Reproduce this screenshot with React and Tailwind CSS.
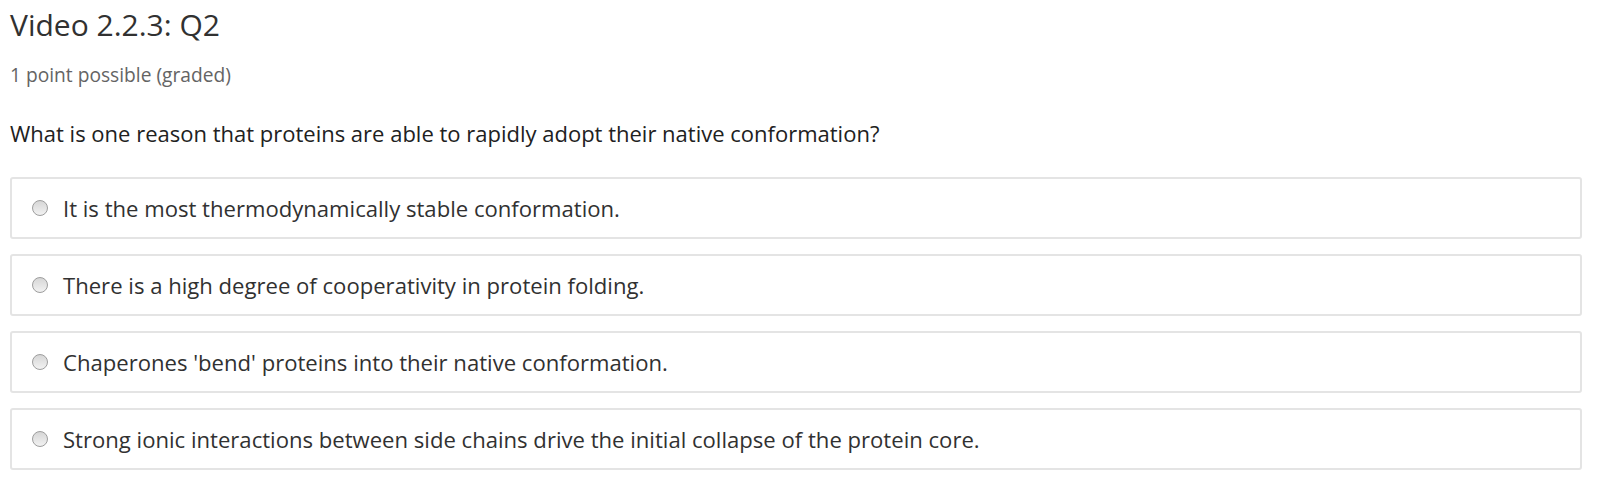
const OPTIONS = [
  "It is the most thermodynamically stable conformation.",
  "There is a high degree of cooperativity in protein folding.",
  "Chaperones 'bend' proteins into their native conformation.",
  "Strong ionic interactions between side chains drive the initial collapse of the protein core.",
];

export default function App() {
  return (
    <div className="w-[1600px] h-[489px] bg-white font-['Open_Sans',sans-serif] text-[#313131] pl-[10px] pr-[18px] pt-[7px]">
      <h3 className="text-[30px] leading-[36px] font-normal text-[#313131]">Video 2.2.3: Q2</h3>
      <div className="mt-[20px] text-[19.2px] leading-[24px] text-[#646464]">1 point possible (graded)</div>
      <p className="mt-[32px] text-[22px] leading-[28px] text-[#212121]">
        What is one reason that proteins are able to rapidly adopt their native conformation?
      </p>
      <div className="mt-[30px] flex flex-col gap-[15px]">
        {OPTIONS.map((text, i) => (
          <label
            key={i}
            className="flex items-center h-[62px] border-2 border-[#e4e4e4] rounded-[3px] pl-[20px] cursor-pointer"
          >
            <span className="w-[16px] h-[16px] rounded-full border border-[#9d9d9d] bg-gradient-to-b from-[#d6d6d6] to-[#f2f2f2] shrink-0" />
            <span className="ml-[15px] text-[22.1px] leading-[28px] text-[#313131]">{text}</span>
          </label>
        ))}
      </div>
    </div>
  );
}
